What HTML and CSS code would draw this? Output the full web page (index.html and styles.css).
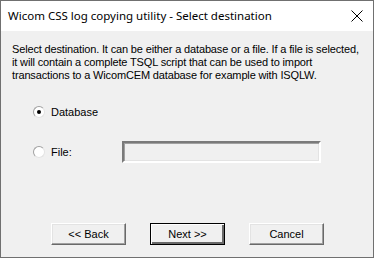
FILE: index.html
```html
<!DOCTYPE html>
<html lang="en">
<head>
  <meta charset="UTF-8" />
  <title>Select destination</title>
  <link rel="stylesheet" href="styles.css">
</head>
<body>
  <div class="window">
    <div class="titlebar">
      <span class="title">Wicom CSS log copying utility - Select destination</span>
      <svg class="close" width="12" height="12" viewBox="0 0 12 12">
        <path d="M0.5 0.5 L11.5 11.5 M11.5 0.5 L0.5 11.5" stroke="#000" stroke-width="1" fill="none" />
      </svg>
    </div>

    <div class="content">
      <p class="intro">
        Select destination. It can be either a database or a file. If a file is selected,<br>
        it will contain a complete TSQL script that can be used to import<br>
        transactions to a WicomCEM database for example with ISQLW.
      </p>

      <div class="options">
        <div class="option-row">
          <label class="option"><span class="radio checked"></span>Database</label>
        </div>
        <div class="option-row">
          <label class="option option-file"><span class="radio"></span>File:</label>
          <div class="field"></div>
        </div>
      </div>

      <div class="buttons">
        <button>&lt;&lt; Back</button>
        <button class="default">Next &gt;&gt;</button>
        <button>Cancel</button>
      </div>
    </div>
  </div>
</body>
</html>
```

FILE: styles.css
```css
body {
  margin: 0;
  padding: 0;
  background: #f0f0f0;
}

.window {
  width: 374px;
  height: 258px;
  box-sizing: border-box;
  border: 1px solid #707070;
  background: #f0f0f0;
  font-family: 'Liberation Sans', Arial, sans-serif;
  font-size: 11px;
  color: #000;
  overflow: hidden;
}

.titlebar {
  height: 30px;
  background: white;
  display: flex;
  align-items: center;
  justify-content: space-between;
  padding: 0 10px 0 7px;
}

.title {
  font-family: 'Noto Sans', sans-serif;
  font-size: 11.5px;
  color: #000;
  margin-top: -1px;
}

.close {
  display: block;
  margin-top: -1px;
}

.content {
  padding: 12px 11px 0 11px;
}

.intro {
  margin: 0;
  line-height: 13px;
  white-space: nowrap;
  letter-spacing: -0.15px;
}

.options {
  margin-top: 19px;
  padding-left: 21px;
  display: flex;
  flex-direction: column;
  gap: 18px;
}

.option-row {
  display: flex;
  align-items: center;
  height: 22px;
}

.option {
  display: flex;
  align-items: center;
  gap: 6px;
}

.option-file {
  width: 89px;
}

.radio {
  width: 12px;
  height: 12px;
  box-sizing: border-box;
  border-radius: 50%;
  background: white;
  border: 1px solid;
  border-color: #a0a0a0 #e3e3e3 #e3e3e3 #a0a0a0;
  display: flex;
  align-items: center;
  justify-content: center;
}

.radio.checked::after {
  content: "";
  width: 4px;
  height: 4px;
  border-radius: 50%;
  background: #000;
}

.field {
  width: 199px;
  height: 22px;
  box-sizing: border-box;
  border: 2px solid;
  border-color: #7a7a7a #ffffff #ffffff #7a7a7a;
  box-shadow: inset 1px 1px 0 #a0a0a0, inset -1px -1px 0 #e3e3e3;
  background: #f0f0f0;
}

.buttons {
  margin-top: 60px;
  padding-left: 39px;
  display: flex;
  gap: 24px;
}

button {
  width: 75px;
  height: 22px;
  box-sizing: border-box;
  padding: 0;
  font-family: 'Liberation Sans', Arial, sans-serif;
  font-size: 11px;
  color: #000;
  background: #f0f0f0;
  border: 1px solid;
  border-color: #ffffff #696969 #696969 #ffffff;
  box-shadow: inset -1px -1px 0 #a0a0a0, inset 1px 1px 0 #e3e3e3;
}

button.default {
  outline: 1px solid #000;
  outline-offset: -1px;
  border-color: #000;
  box-shadow: inset 1px 1px 0 #ffffff, inset -2px -2px 0 #696969;
}
```
